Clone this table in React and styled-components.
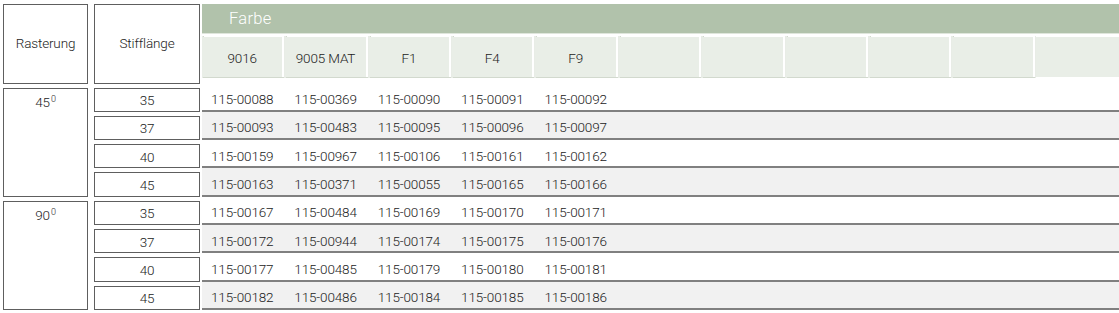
import React from 'react';
import styled, { createGlobalStyle } from 'styled-components';

const GlobalStyle = createGlobalStyle`
	html, body {
		margin: 0;
		padding: 0;
		background: #fff;
	}
	body {
		font-family: Roboto, "DejaVu Sans Condensed", sans-serif;
		font-weight: 300;
		color: #222;
	}
`;

const ROW_HEIGHT = 28.33;
const COLUMNS = 11;

const colors = ['9016', '9005 MAT', 'F1', 'F4', 'F9'];

const groups = [
	{
		angle: '45',
		rows: [
			{ length: '35', codes: ['115-00088', '115-00369', '115-00090', '115-00091', '115-00092'] },
			{ length: '37', codes: ['115-00093', '115-00483', '115-00095', '115-00096', '115-00097'] },
			{ length: '40', codes: ['115-00159', '115-00967', '115-00106', '115-00161', '115-00162'] },
			{ length: '45', codes: ['115-00163', '115-00371', '115-00055', '115-00165', '115-00166'] },
		],
	},
	{
		angle: '90',
		rows: [
			{ length: '35', codes: ['115-00167', '115-00484', '115-00169', '115-00170', '115-00171'] },
			{ length: '37', codes: ['115-00172', '115-00944', '115-00174', '115-00175', '115-00176'] },
			{ length: '40', codes: ['115-00177', '115-00485', '115-00179', '115-00180', '115-00181'] },
			{ length: '45', codes: ['115-00182', '115-00486', '115-00184', '115-00185', '115-00186'] },
		],
	},
];

export default function App () {
	let rowIndex = 0;
	return (
		<>
			<GlobalStyle />
			<StyledTable>
				<StyledHeadBox col={1}>Rasterung</StyledHeadBox>
				<StyledHeadBox col={2}>Stifflänge</StyledHeadBox>
				<StyledColorHead>
					<StyledBand>Farbe</StyledBand>
					<StyledHeadRow>
						{Array.from({ length: COLUMNS }, (_, i) => (
							<StyledHeadCell key={i}>{colors[i] || ''}</StyledHeadCell>
						))}
					</StyledHeadRow>
				</StyledColorHead>
				{groups.map((group, g) => (
					<React.Fragment key={group.angle}>
						<StyledGroupBox start={2 + g * 4}>
							{group.angle}<sup>0</sup>
						</StyledGroupBox>
						{group.rows.map((row) => {
							const line = 2 + rowIndex;
							const shaded = rowIndex % 2 === 1;
							rowIndex += 1;
							return (
								<React.Fragment key={row.length}>
									<StyledLengthBox line={line}>{row.length}</StyledLengthBox>
									<StyledDataRow line={line} shaded={shaded}>
										{Array.from({ length: COLUMNS }, (_, i) => (
											<StyledDataCell key={i}>{row.codes[i] || ''}</StyledDataCell>
										))}
									</StyledDataRow>
								</React.Fragment>
							);
						})}
					</React.Fragment>
				))}
			</StyledTable>
		</>
	);
}

const StyledTable = styled.div`
	display: grid;
	grid-template-columns: 91px 108px 1fr;
	grid-template-rows: 79.5px repeat(8, ${ROW_HEIGHT}px);
	padding: 4px 0 0 3px;
	font-size: 13.5px;
	letter-spacing: -0.15px;
`;

const StyledBox = styled.div`
	box-sizing: border-box;
	border: 1px solid #5e5e5e;
	background: #fff;
	display: flex;
	justify-content: center;
`;

const StyledHeadBox = styled(StyledBox)`
	grid-column: ${(p) => p.col};
	grid-row: 1;
	align-items: center;
	width: ${(p) => (p.col === 1 ? 85 : 106)}px;
	padding-bottom: 1px;
`;

const StyledGroupBox = styled(StyledBox)`
	grid-column: 1;
	grid-row: ${(p) => p.start} / span 4;
	width: 85px;
	margin-top: 4px;
	align-items: flex-start;
	padding-top: 5px;
	sup {
		font-size: 9px;
		line-height: 1;
		vertical-align: top;
		margin-top: 1px;
		margin-left: 1px;
	}
`;

const StyledLengthBox = styled(StyledBox)`
	grid-column: 2;
	grid-row: ${(p) => p.line};
	width: 106px;
	margin-top: 4px;
	align-items: center;
	padding-top: 1px;
`;

const StyledColorHead = styled.div`
	grid-column: 3;
	grid-row: 1;
	display: flex;
	flex-direction: column;
`;

const StyledBand = styled.div`
	height: 29px;
	background: #b1c2ab;
	border-bottom: 1px solid #dfe6dc;
	color: #fff;
	font-size: 16.5px;
	line-height: 30px;
	padding-left: 27px;
	letter-spacing: 0.3px;
`;

const StyledHeadRow = styled.div`
	display: grid;
	grid-template-columns: repeat(${COLUMNS}, 1fr);
	margin-top: 3px;
	height: 40px;
`;

const StyledHeadCell = styled.div`
	display: flex;
	align-items: center;
	justify-content: center;
	background: #e9eee7;
	margin-right: 3px;
	padding-top: 1px;
	box-shadow: 2px 0 0 #fff, 2px -3px 0 #fff, 1.5px 0 0 1px #d2d9ce;
	&:last-child {
		margin-right: 0;
		box-shadow: none;
	}
`;

const StyledDataRow = styled.div`
	grid-column: 3;
	grid-row: ${(p) => p.line};
	display: grid;
	grid-template-columns: repeat(${COLUMNS}, 1fr);
	box-sizing: border-box;
	background: ${(p) => (p.shaded ? '#f1f1f1' : '#fff')};
	border-bottom: 2px solid #808080;
	align-items: center;
	padding-top: 5px;
`;

const StyledDataCell = styled.div`
	padding-left: 9px;
	white-space: nowrap;
`;
